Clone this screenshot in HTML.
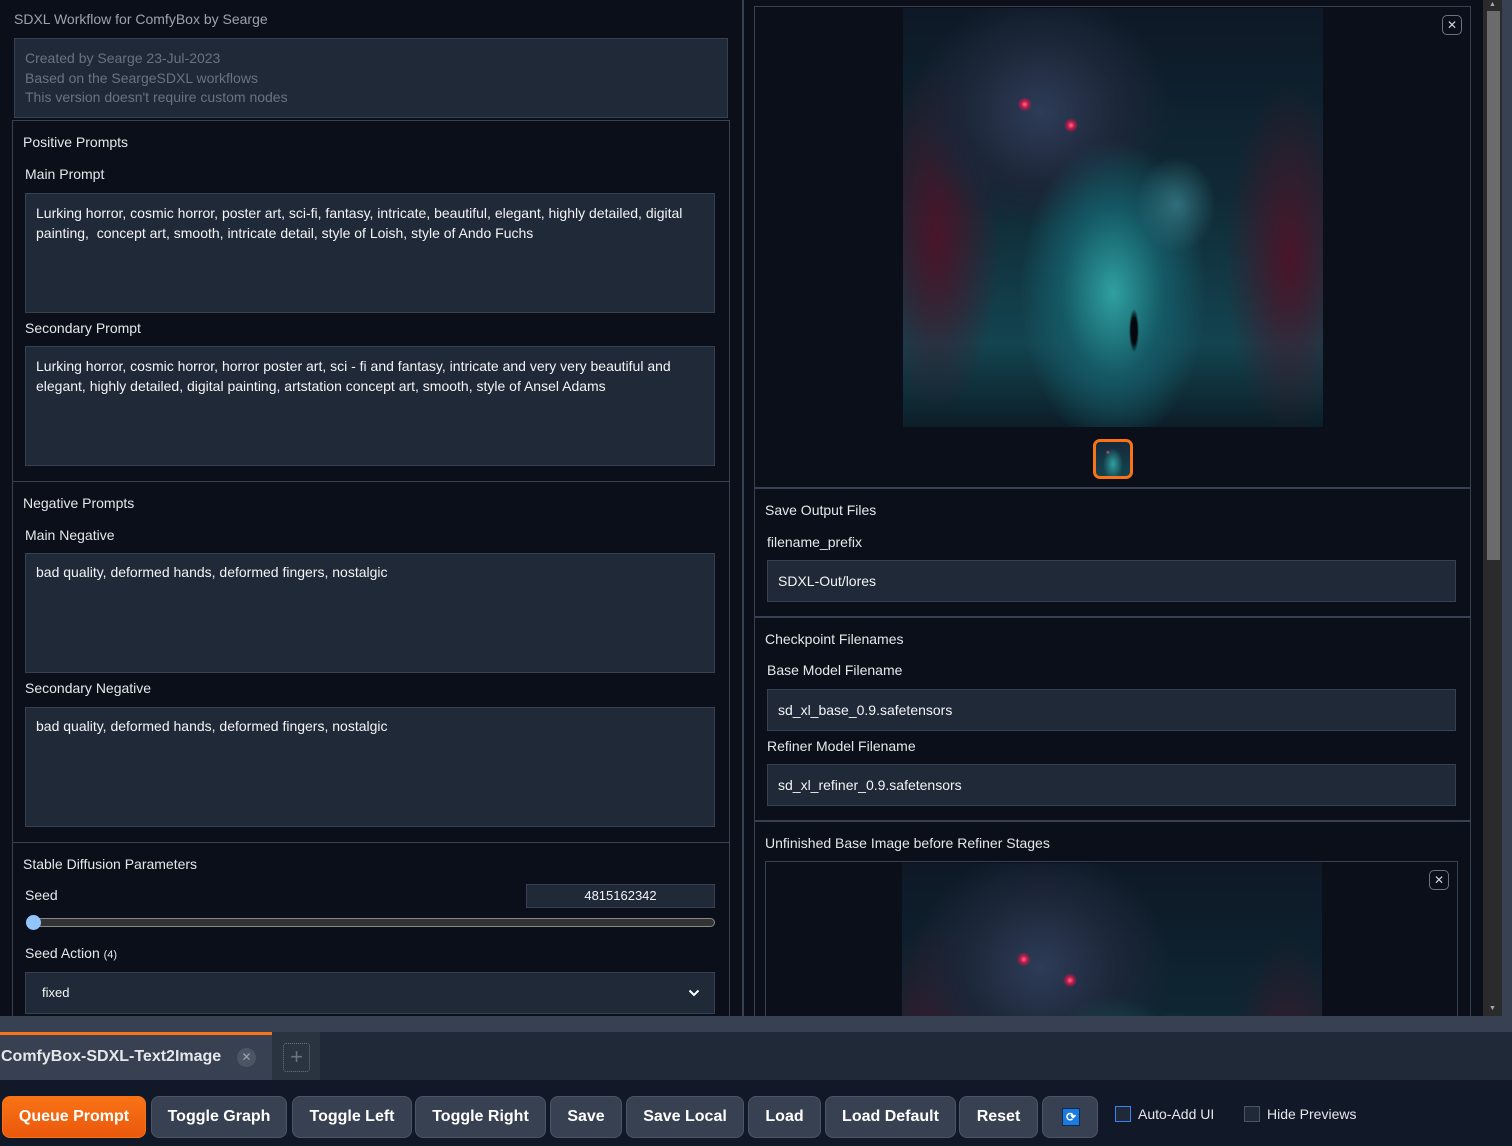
<!DOCTYPE html>
<html style="width:1512px;height:1146px;overflow:hidden"><head><meta charset="utf-8"><style>
*{box-sizing:border-box;margin:0;padding:0}
body{width:1512px;height:1146px;overflow:hidden;background:#0b0f19;font-family:"Liberation Sans",Arial,sans-serif;color:#e5e7eb;font-size:14px;position:relative}
.a{position:absolute}
.box{position:absolute;border:1px solid #374151}
.inp{position:absolute;background:#1f2937;border:1px solid #374151;color:#f3f4f6;font-size:14px}
.lbl{position:absolute;font-size:14px;color:#e5e7eb}
.btn{position:absolute;top:1096px;height:42px;background:#374151;border:1px solid #4b5563;border-radius:8px;color:#fff;font-weight:bold;font-size:16px;text-align:center;line-height:40px}
.art{background:
radial-gradient(circle 7px at 29% 23%,#ff6d8a 0%,#c01848 50%,transparent 100%),
radial-gradient(circle 7px at 40% 28%,#ff6d8a 0%,#c01848 50%,transparent 100%),
radial-gradient(ellipse 5px 22px at 55% 77%,#05080c 0%,#05080c 60%,transparent 100%),
radial-gradient(ellipse 50px 60px at 65% 47%,#2f6f7a 0%,transparent 80%),
radial-gradient(ellipse 110px 180px at 50% 68%,#2fa0a0 0%,#155a66 45%,transparent 85%),
radial-gradient(ellipse 130px 120px at 33% 25%,#2e3c58 0%,#1c2638 60%,transparent 100%),
radial-gradient(ellipse 80px 220px at 8% 55%,#4a1428 0%,transparent 80%),
radial-gradient(ellipse 80px 220px at 92% 60%,#4a1428 0%,transparent 80%),
linear-gradient(180deg,#0e1826 0%,#0f2a36 45%,#134450 80%,#0c1e28 100%);background-size:420px 419px;background-repeat:no-repeat}
.thumb{background:radial-gradient(ellipse 10px 16px at 50% 65%,#2fa0a0,transparent),radial-gradient(circle 2px at 35% 30%,#ff4d7a,transparent),linear-gradient(#16283a,#134450)}
</style></head><body>
<!-- left column -->
<div class="a" style="left:14px;top:11px;color:#9ca3af;font-size:14px">SDXL Workflow for ComfyBox by Searge</div>
<div class="box" style="left:14px;top:38px;width:714px;height:80px;background:#1f2937;color:#6b7280;font-size:14px;padding:10px 10px;line-height:19.5px">Created by Searge 23-Jul-2023<br>Based on the SeargeSDXL workflows<br>This version doesn't require custom nodes</div>

<div class="box" style="left:12px;top:120px;width:718px;height:362px"></div>
<div class="lbl" style="left:23px;top:134px">Positive Prompts</div>
<div class="lbl" style="left:25px;top:166px">Main Prompt</div>
<div class="inp" style="left:25px;top:193px;width:690px;height:120px;padding:10px 10px;line-height:19.5px">Lurking horror, cosmic horror, poster art, sci-fi, fantasy, intricate, beautiful, elegant, highly detailed, digital painting,&nbsp; concept art, smooth, intricate detail, style of Loish, style of Ando Fuchs</div>
<div class="lbl" style="left:25px;top:320px">Secondary Prompt</div>
<div class="inp" style="left:25px;top:346px;width:690px;height:120px;padding:10px 10px;line-height:19.5px">Lurking horror, cosmic horror, horror poster art, sci - fi and fantasy, intricate and very very beautiful and elegant, highly detailed, digital painting, artstation concept art, smooth, style of Ansel Adams</div>

<div class="box" style="left:12px;top:481px;width:718px;height:362px"></div>
<div class="lbl" style="left:23px;top:495px">Negative Prompts</div>
<div class="lbl" style="left:25px;top:527px">Main Negative</div>
<div class="inp" style="left:25px;top:553px;width:690px;height:120px;padding:10px 10px">bad quality, deformed hands, deformed fingers, nostalgic</div>
<div class="lbl" style="left:25px;top:680px">Secondary Negative</div>
<div class="inp" style="left:25px;top:707px;width:690px;height:120px;padding:10px 10px">bad quality, deformed hands, deformed fingers, nostalgic</div>

<div class="box" style="left:12px;top:842px;width:718px;height:174px;border-bottom:none"></div>
<div class="lbl" style="left:23px;top:856px">Stable Diffusion Parameters</div>
<div class="lbl" style="left:25px;top:887px">Seed</div>
<div class="inp" style="left:526px;top:884px;width:189px;height:24px;text-align:center;line-height:22px;font-size:13px">4815162342</div>
<div class="a" style="left:26px;top:918px;width:689px;height:9px;border-radius:5px;background:#333;border:1px solid #888"></div>
<div class="a" style="left:26px;top:915px;width:15px;height:15px;border-radius:50%;background:#93c5fd"></div>
<div class="lbl" style="left:25px;top:945px">Seed Action <span style="font-size:11px">(4)</span></div>
<div class="inp" style="left:25px;top:972px;width:690px;height:42px;padding:0 16px;line-height:40px;font-size:13px">fixed<svg class="a" style="right:14px;top:15px" width="12" height="10" viewBox="0 0 12 10"><path d="M1.5 2.5L6 7L10.5 2.5" stroke="#fff" stroke-width="2" fill="none"/></svg></div>

<div class="a" style="left:742px;top:0;width:2px;height:1016px;background:#374151"></div>

<!-- right column -->
<div class="box" style="left:754px;top:6px;width:717px;height:1010px;border-bottom:none"></div>
<div class="a art" style="left:903px;top:8px;width:420px;height:419px"></div>
<div class="a" style="left:1442px;top:15px;width:20px;height:20px;border:1px solid #6b7280;border-radius:5px;color:#d1d5db;font-size:12px;text-align:center;line-height:18px">✕</div>
<div class="a thumb" style="left:1093px;top:439px;width:40px;height:40px;border:3px solid #f97316;border-radius:7px"></div>
<div class="a" style="left:755px;top:487px;width:715px;height:2px;background:#374151"></div>
<div class="lbl" style="left:765px;top:502px">Save Output Files</div>
<div class="lbl" style="left:767px;top:534px">filename_prefix</div>
<div class="inp" style="left:767px;top:560px;width:689px;height:42px;padding:0 10px;line-height:40px">SDXL-Out/lores</div>
<div class="a" style="left:755px;top:616px;width:715px;height:2px;background:#374151"></div>
<div class="lbl" style="left:765px;top:631px">Checkpoint Filenames</div>
<div class="lbl" style="left:767px;top:662px">Base Model Filename</div>
<div class="inp" style="left:767px;top:689px;width:689px;height:42px;padding:0 10px;line-height:40px">sd_xl_base_0.9.safetensors</div>
<div class="lbl" style="left:767px;top:738px">Refiner Model Filename</div>
<div class="inp" style="left:767px;top:764px;width:689px;height:42px;padding:0 10px;line-height:40px">sd_xl_refiner_0.9.safetensors</div>
<div class="a" style="left:755px;top:820px;width:715px;height:2px;background:#374151"></div>
<div class="lbl" style="left:765px;top:835px">Unfinished Base Image before Refiner Stages</div>
<div class="box" style="left:765px;top:861px;width:693px;height:155px;border-bottom:none"></div>
<div class="a art" style="left:902px;top:863px;width:420px;height:153px"></div>
<div class="a" style="left:1429px;top:870px;width:20px;height:20px;border:1px solid #6b7280;border-radius:5px;color:#d1d5db;font-size:12px;text-align:center;line-height:18px">✕</div>

<!-- scrollbar -->
<div class="a" style="left:1483px;top:0;width:19px;height:1016px;background:#2b2b2b"></div>
<div class="a" style="left:1487px;top:11px;width:13px;height:549px;background:#6b6b6b"></div>
<div class="a" style="left:1489px;top:0;color:#aaa;font-size:7px;line-height:9px">▲</div>
<div class="a" style="left:1489px;top:1004px;color:#aaa;font-size:7px;line-height:9px">▼</div>
<div class="a" style="left:1502px;top:0;width:10px;height:1016px;background:#374151"></div>

<!-- bottom -->
<div class="a" style="left:0;top:1016px;width:1512px;height:16px;background:#374151"></div>
<div class="a" style="left:0;top:1032px;width:1512px;height:48px;background:#1f2937"></div>
<div class="a" style="left:0;top:1032px;width:272px;height:48px;background:#374151;border-top:3px solid #f97316"></div>
<div class="a" style="left:1px;top:1048px;font-size:16px;font-weight:bold;color:#e5e7eb">ComfyBox-SDXL-Text2Image</div>
<div class="a" style="left:237px;top:1048px;width:19px;height:19px;border-radius:50%;background:#4b5563;color:#9ca3af;font-size:12px;text-align:center;line-height:19px">✕</div>
<div class="a" style="left:272px;top:1032px;width:48px;height:48px;background:#2a3441"></div>
<div class="a" style="left:283px;top:1043px;width:27px;height:29px;border:1px dotted #6b7280;border-radius:3px;color:#6b7280;font-size:22px;text-align:center;line-height:26px">+</div>
<div class="a" style="left:0;top:1080px;width:1512px;height:66px;background:#111827"></div>
<div class="btn" style="left:2px;width:144px;background:linear-gradient(#f97316,#ea580c);border-color:#f97316">Queue Prompt</div>
<div class="btn" style="left:151px;width:136px">Toggle Graph</div>
<div class="btn" style="left:292px;width:120px">Toggle Left</div>
<div class="btn" style="left:415px;width:131px">Toggle Right</div>
<div class="btn" style="left:550px;width:72px">Save</div>
<div class="btn" style="left:626px;width:118px">Save Local</div>
<div class="btn" style="left:748px;width:73px">Load</div>
<div class="btn" style="left:825px;width:131px">Load Default</div>
<div class="btn" style="left:959px;width:79px">Reset</div>
<div class="btn" style="left:1042px;width:56px"><div style="position:absolute;left:19px;top:11px;width:18px;height:18px;background:#1a7ae0;border:1px solid #0a2a50;color:#fff;font-size:12px;line-height:16px">⟳</div></div>
<div class="a" style="left:1115px;top:1106px;width:16px;height:16px;border:1px solid #3b82f6;background:#1f2937"></div>
<div class="a" style="left:1138px;top:1106px;font-size:14px;color:#e5e7eb">Auto-Add UI</div>
<div class="a" style="left:1244px;top:1106px;width:16px;height:16px;border:1px solid #4b5563;background:#1f2937"></div>
<div class="a" style="left:1267px;top:1106px;font-size:14px;color:#e5e7eb">Hide Previews</div>
</body></html>
